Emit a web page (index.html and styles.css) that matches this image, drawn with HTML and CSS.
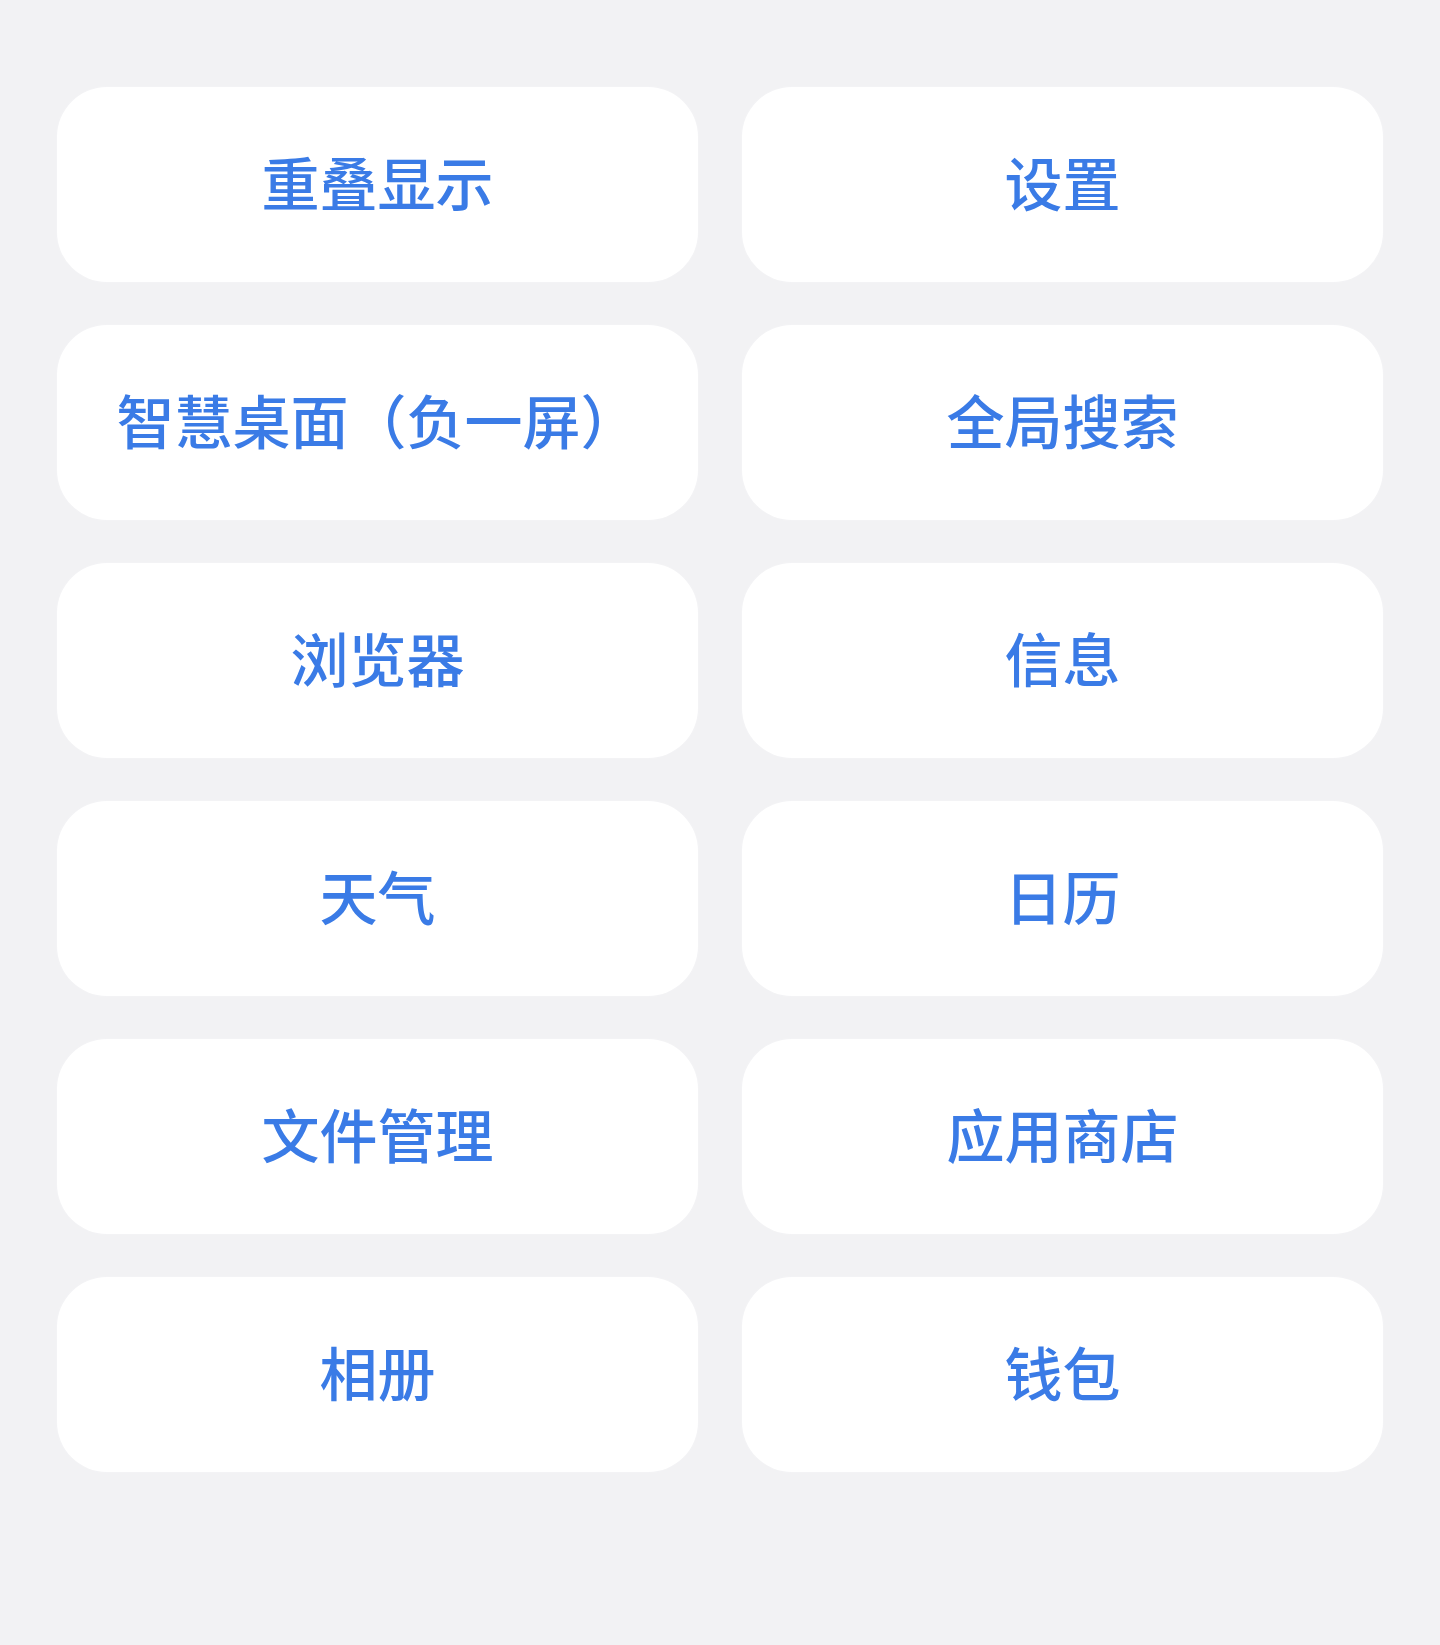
FILE: index.html
```html
<!DOCTYPE html>
<html lang="zh-CN">
<head>
<meta charset="utf-8">
<title>快捷入口</title>
<link rel="stylesheet" href="styles.css">
</head>
<body>
<main class="grid">
  <div class="card">重叠显示</div>
  <div class="card">设置</div>
  <div class="card">智慧桌面（负一屏）</div>
  <div class="card">全局搜索</div>
  <div class="card">浏览器</div>
  <div class="card">信息</div>
  <div class="card">天气</div>
  <div class="card">日历</div>
  <div class="card">文件管理</div>
  <div class="card">应用商店</div>
  <div class="card">相册</div>
  <div class="card">钱包</div>
</main>
</body>
</html>
```

FILE: styles.css
```css
html, body {
  margin: 0;
  padding: 0;
  background: #f2f2f4;
}
body {
  min-height: 1645px;
  font-family: "Noto Sans CJK SC", "Noto Sans", sans-serif;
}
.grid {
  display: grid;
  grid-template-columns: 641px 641px;
  column-gap: 44px;
  row-gap: 43px;
  padding: 87px 57px 0 57px;
}
.card {
  box-sizing: border-box;
  height: 195px;
  padding-bottom: 8px;
  background: #ffffff;
  border-radius: 50px;
  box-shadow: 0 0 0 1px #f3f3f5;
  display: flex;
  align-items: center;
  justify-content: center;
  color: #3a7be6;
  font-size: 58px;
  font-weight: 500;
  line-height: 1;
}
```
